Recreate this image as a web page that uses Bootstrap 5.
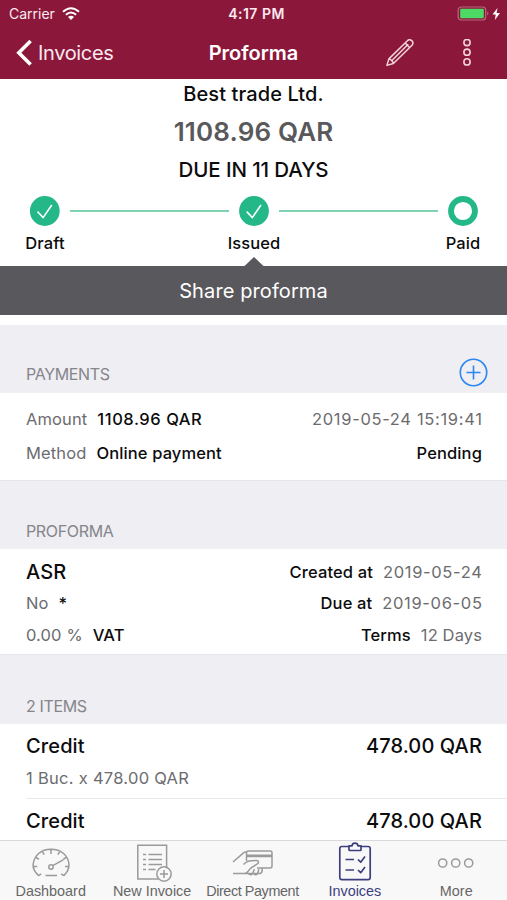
<!DOCTYPE html>
<html lang="en">
<head>
<meta charset="utf-8">
<meta name="viewport" content="width=device-width, initial-scale=1">
<title>Proforma</title>
<link rel="stylesheet" href="https://cdn.jsdelivr.net/npm/bootstrap@5.3.0/dist/css/bootstrap.min.css">
<style>
  body { font-family: Inter, "Liberation Sans", sans-serif; font-size: 16.5px; font-weight: 500; color: #0c0c0d; background: #fff; height: 900px; overflow: hidden; }
  svg { display: block; fill: none; flex: none; }
  .app-head { background: #8b183b; color: #fbe9ef; height: 79px; }
  .status-line { height: 27px; font-size: 14px; padding: 0 5px 0 9px; }
  .status-side { width: 120px; gap: 7px; }
  .clock { letter-spacing: .5px; margin-left: 2px; }
  .title-bar { height: 52px; padding: 0 35px 0 16px; }
  .title-left { width: 160px; gap: 6px; }
  .title-right { width: 141px; gap: 48px; }
  .back-label { font-size: 20px; font-weight: 400; letter-spacing: -.35px; }
  .page-title { font-size: 20px; font-weight: 600; }
  .summary { height: 187px; }
  .client { font-size: 20px; line-height: 31px; letter-spacing: .1px; }
  .total { font-size: 26px; line-height: 44px; font-weight: 600; color: #59595b; letter-spacing: .15px; }
  .due { font-size: 20.5px; line-height: 32px; letter-spacing: -.1px; }
  .steps { height: 50px; padding: 0 29px; }
  .step-line { height: 2px; background: #7fd3b1; margin: 0 10px; }
  .step-names { line-height: 15px; padding: 0 7px 0 8px; letter-spacing: .1px; }
  .step-names > div { width: 74px; }
  .share-bar, .share-bar:hover { height: 49px; background: #59585c; color: #fff; font-size: 20px; letter-spacing: .1px; margin-bottom: 10px; border-radius: 0; }
  .share-tip { top: -9px; left: 244px; }
  .sect-head { background: #eeeef3; color: #85858a; font-weight: 400; font-size: 16px; padding: 0 19px 0 26px; letter-spacing: -.35px; line-height: 36px; }
  .head-lg { height: 68px; }
  .head-lg span { line-height: 37px; }
  .head-md { height: 69px; border-top: 1px solid #e6e6ea; }
  .head-items { height: 70px; }
  .add-btn { height: 41px; }
  .rows { padding: 0 25px 0 26px; letter-spacing: .12px; }
  .pair { gap: 10px; }
  .muted-text { color: #6c6c6f; font-weight: 400; }
  .stamp { letter-spacing: .67px; margin-right: -.6px; }
  .sum { letter-spacing: .55px; }
  .sub-line { letter-spacing: .28px; }
  .big { font-size: 20px; }
  .payments { height: 87px; padding-top: 9px; }
  .payments .line { height: 34px; }
  .details { height: 105px; padding-top: 7px; }
  .details .line { height: 31.8px; }
  .item { height: 74px; padding-top: 5px; }
  .item .line { height: 33px; }
  .item-rule { margin-left: 26px; height: 1px; background: #e9e9ea; }
  .item-last { height: 41px; padding-top: 3px; }
  .tab-bar { height: 60px; background: #f8f8f8; border-top: 1px solid #d9d9db; font: 400 14.4px "Liberation Sans", Arial, sans-serif; color: #666; }
  .tab-bar svg { stroke: #9a9a9a; stroke-width: 1.5; }
  .tab-bar .current { color: #3c3f7d; }
  .tab-bar .current svg { stroke: #3c3f7d; }
  .tab-bar span { line-height: 16px; white-space: nowrap; }
  .tab-bar .tight { letter-spacing: -.42px; margin-right: 2px; }
</style>
<script src="https://cdn.jsdelivr.net/npm/bootstrap@5.3.0/dist/js/bootstrap.bundle.min.js"></script>
</head>
<body class="d-flex flex-column">
<header class="app-head">
  <div class="status-line d-flex align-items-center justify-content-between">
    <div class="status-side d-flex align-items-center fw-normal"><span>Carrier</span>
      <svg width="18" height="14" viewBox="0 0 18 14" stroke="#fff" stroke-width="2"><path d="M1 4.8Q9-2.4 17 4.8M3.9 7.8Q9 3.2 14.1 7.8"/><path d="M6 9.9Q9 7.4 12 9.9L9 13z" fill="#fff" stroke="none"/></svg>
    </div>
    <div class="clock fw-semibold">4:17 PM</div>
    <div class="status-side d-flex align-items-center justify-content-end">
      <svg width="45" height="16" viewBox="0 0 45 16"><rect x="1.2" y="1" width="27.5" height="13" rx="3" stroke="#b9687f" stroke-width="1.2"/><rect x="3.2" y="2.8" width="23.6" height="9.4" rx="1" fill="#4cd964"/><path d="M30.4 5.6q2 2 0 4z" fill="#c0808f"/><path d="M40.500 2L35.500 8.600h3.200L37.900 14 43 7h-3.400z" fill="#fff"/></svg>
    </div>
  </div>
  <div class="title-bar d-flex align-items-center">
    <div class="title-left d-flex align-items-center">
      <svg width="16" height="27" viewBox="0 0 16 27" stroke="#fff" stroke-width="3.6"><path d="M14.600 1L2.800 12.800l11.800 11.800"/></svg>
      <span class="back-label">Invoices</span>
    </div>
    <div class="page-title text-white text-center flex-grow-1">Proforma</div>
    <div class="title-right d-flex align-items-center justify-content-end">
      <svg width="28" height="28" viewBox="0 0 28 28" stroke="#f3d3dc" stroke-width="1.500" stroke-linejoin="round"><path d="M.9 26.400l2-6.500L21.400 1.700q2-1.900 4.300 0t.3 4.600L7.400 24.500zM2.900 19.900q3.600.8 4.500 4.600M5.200 22.200L22.200 5.200M19.200 4l4.300 4.500"/></svg>
      <svg width="10" height="28" viewBox="0 0 10 28" stroke="#f3d3dc" stroke-width="1.600"><circle cx="5" cy="3.500" r="3.100"/><circle cx="5" cy="13.200" r="3.100"/><circle cx="5" cy="22.900" r="3.100"/></svg>
    </div>
  </div>
</header>

<section class="summary text-center">
  <div class="client">Best trade Ltd.</div>
  <div class="total">1108.96 QAR</div>
  <div class="due">DUE IN 11 DAYS</div>
  <div class="steps d-flex align-items-center">
    <svg width="31" height="30" viewBox="0 0 31 30"><circle cx="15.8" cy="15" r="14.9" fill="#24b888"/><path d="M8.5 15.6l5.6 6L22.8 9" stroke="#fff" stroke-width="1.6"/></svg>
    <div class="step-line flex-grow-1"></div>
    <svg width="30" height="30" viewBox="0 0 30 30"><circle cx="15" cy="15" r="14.9" fill="#24b888"/><path d="M7.7 15.6l5.6 6L22 9" stroke="#fff" stroke-width="1.6"/></svg>
    <div class="step-line flex-grow-1"></div>
    <svg width="30" height="30" viewBox="0 0 30 30"><circle cx="15" cy="15" r="12" stroke="#24b888" stroke-width="5.8"/></svg>
  </div>
  <div class="step-names d-flex justify-content-between"><div>Draft</div><div>Issued</div><div>Paid</div></div>
</section>
<button class="share-bar btn position-relative w-100 p-0 border-0">
  <svg class="share-tip position-absolute" width="20" height="10" viewBox="0 0 20 10"><path d="M0 10V9.500L10 0l10 9.500v.5z" fill="#59585c"/></svg>Share proforma
</button>

<div class="sect-head head-lg d-flex justify-content-between align-items-end"><span>PAYMENTS</span>
  <svg class="add-btn" width="29" height="41" viewBox="0 0 29 41" stroke="#2b86f0" stroke-width="1.6"><circle cx="14.500" cy="20.500" r="13.200"/><path d="M7.500 20.500h14M14.500 13.500v14"/></svg>
</div>
<div class="rows payments">
  <div class="line d-flex justify-content-between align-items-center">
    <div class="pair d-flex"><span class="muted-text">Amount</span><span class="sum">1108.96 QAR</span></div>
    <span class="muted-text stamp">2019-05-24 15:19:41</span>
  </div>
  <div class="line d-flex justify-content-between align-items-center">
    <div class="pair d-flex"><span class="muted-text">Method</span><span>Online payment</span></div>
    <span>Pending</span>
  </div>
</div>

<div class="sect-head head-md d-flex align-items-end"><span>PROFORMA</span></div>
<div class="rows details">
  <div class="line d-flex justify-content-between align-items-center">
    <span class="big">ASR</span>
    <div class="pair d-flex"><span>Created at</span><span class="muted-text stamp">2019-05-24</span></div>
  </div>
  <div class="line d-flex justify-content-between align-items-center">
    <div class="pair d-flex"><span class="muted-text">No</span><span>*</span></div>
    <div class="pair d-flex"><span>Due at</span><span class="muted-text stamp">2019-06-05</span></div>
  </div>
  <div class="line d-flex justify-content-between align-items-center">
    <div class="pair d-flex"><span class="muted-text">0.00 %</span><span>VAT</span></div>
    <div class="pair d-flex"><span>Terms</span><span class="muted-text">12 Days</span></div>
  </div>
</div>

<div class="sect-head head-md head-items d-flex align-items-end"><span>2 ITEMS</span></div>
<div class="rows item">
  <div class="line big d-flex justify-content-between align-items-center"><span>Credit</span><span>478.00 QAR</span></div>
  <div class="line muted-text sub-line d-flex align-items-center">1 Buc. x 478.00 QAR</div>
</div>
<div class="item-rule"></div>
<div class="rows item-last big d-flex justify-content-between align-items-center"><span>Credit</span><span>478.00 QAR</span></div>

<nav class="tab-bar row row-cols-5 g-0 text-center">
  <div class="col d-flex flex-column align-items-center">
    <svg width="40" height="42" viewBox="0 0 40 42"><path d="M7.600 34.600Q1.700 29 2.100 23.700C3 14.500 10 8.200 20 8.200S37.500 14.500 38 23.700Q38 29.500 32.800 34.600M7.600 34.600l2.600-1.800M32.800 34.600l-2.600-1.800M2.200 25.500h4M34 25.500h4M5 16.500l3 1.800M11.500 10.600l1.700 3M20 8.500v4.500M28.600 10.600l-1.700 3M35.200 16.500l-3 1.800M14.500 34.400h11.500M22.200 24.300l10-5.500"/><circle cx="20" cy="26" r="2.200"/></svg>
    <span>Dashboard</span>
  </div>
  <div class="col d-flex flex-column align-items-center">
    <svg width="40" height="42" viewBox="0 0 40 42"><path d="M26.500 38H5.800V4.200h28.800v23M11 13.600h3M16.500 13.600h13.500M11 18.600h3M16.500 18.600h13.500M11 23.600h3M16.500 23.600h13.500M11 28.600h3M16.500 28.600h7"/><circle cx="32" cy="33" r="7.200"/><path d="M28 33h8M32 29v8"/></svg>
    <span>New Invoice</span>
  </div>
  <div class="col d-flex flex-column align-items-center">
    <svg width="42" height="42" viewBox="0 0 42 42" stroke-linejoin="round"><path d="M1 21L11.500 11.900q1.500-1.200 3.500-1.200M14.500 20V12q0-2 2-2h21.500q2 0 2 2v13q0 2-2 2H25M14.500 14.200H40M14.500 15.400H40M11.500 23.500q3-3.500 8-3.800l5-.3q3 .3 1.500 3l-7.500 5q-2.500 3.500-5 5.100H1M13.500 32.500H28q2.800-.8 2-5M16 32q2.500 3.500 4.800.3l1.500-4M21 32q2.500 3.500 4.800.3l1-4"/></svg>
    <span class="tight">Direct Payment</span>
  </div>
  <div class="col current d-flex flex-column align-items-center">
    <svg width="40" height="42" viewBox="0 0 40 42" stroke-linejoin="round"><path d="M14 5.500H7q-2.200 0-2.200 2.200v28.800q0 2.200 2.200 2.200h26q2.200 0 2.200-2.200V7.700q0-2.200-2.200-2.200h-7M14 4.800h3q.3-2.600 3-2.600t3 2.600h3v4q0 .7-.7.700H14.700q-.7 0-.7-.7zM10.500 18.500h8.500M10.500 29h8.500M23 18.500l2.700 2.700 4.300-5.600M23 29l2.700 2.700 4.300-5.600" stroke-width="1.700"/></svg>
    <span>Invoices</span>
  </div>
  <div class="col d-flex flex-column align-items-center">
    <svg width="40" height="42" viewBox="0 0 40 42"><circle cx="6.700" cy="22" r="4.100"/><circle cx="19.700" cy="22" r="4.100"/><circle cx="32.700" cy="22" r="4.100"/></svg>
    <span>More</span>
  </div>
</nav>
</body>
</html>
